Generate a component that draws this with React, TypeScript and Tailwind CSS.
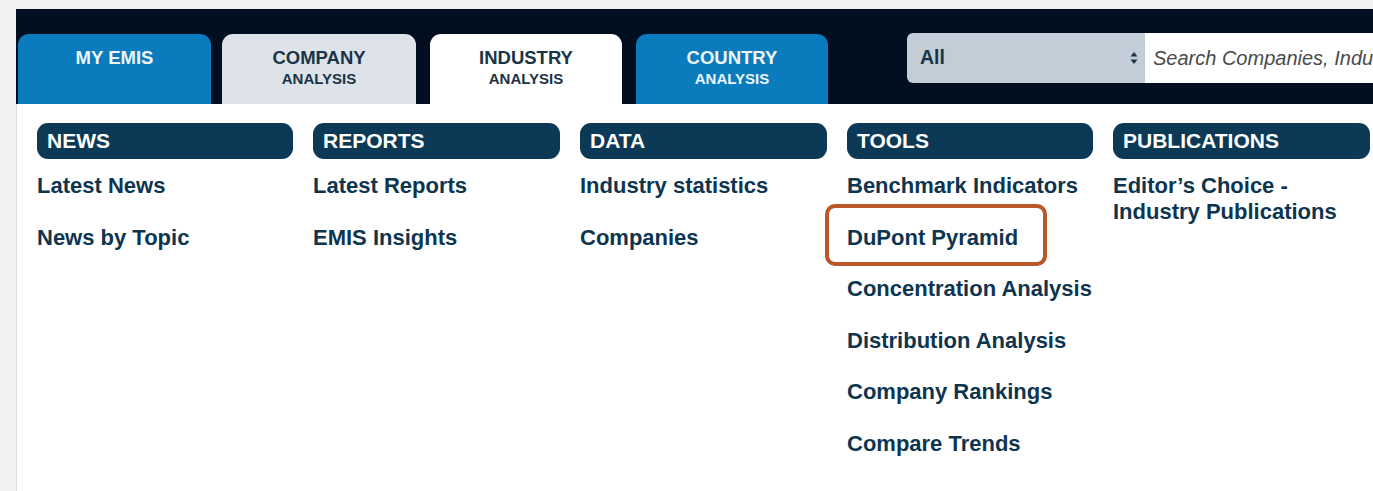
import React from "react";

const font = { fontFamily: '"Liberation Sans", Arial, sans-serif' };

type TabProps = { top: string; bottom?: string; variant: "blue" | "gray" | "white"; className?: string };

function Tab({ top, bottom, variant, className = "" }: TabProps) {
  const bg =
    variant === "blue" ? "bg-[#0a7cbd] text-[#eef5fb]" : variant === "gray" ? "bg-[#dde3e8] text-[#1a3347]" : "bg-white text-[#1a3347]";
  return (
    <div className={`shrink-0 h-[70px] rounded-t-[11px] flex flex-col items-center pt-[13px] font-bold ${bg} ${className}`}>
      <div className="text-[18.5px] leading-[22px]">{top}</div>
      {bottom && <div className="text-[15px] leading-[20px]">{bottom}</div>}
    </div>
  );
}

type ColProps = { title: string; items: React.ReactNode[]; width: string; highlight?: number };

function Column({ title, items, width, highlight }: ColProps) {
  return (
    <div className={`shrink-0 flex flex-col ${width}`}>
      <div className="h-[36px] rounded-[11px] bg-[#0c3956] text-white font-bold text-[21px] leading-[36px] pl-[10px]">{title}</div>
      <div className="flex flex-col gap-[25.5px] mt-[14px]">
        {items.map((it, i) => (
          <div key={i} className="relative text-[#0e3550] font-bold text-[22px] leading-[26px] whitespace-nowrap">
            {highlight === i && (
              <div className="absolute left-[-22px] top-[-21px] w-[222px] h-[62px] border-[4px] border-[#b9562a] rounded-[10px]" />
            )}
            {it}
          </div>
        ))}
      </div>
    </div>
  );
}

export default function App() {
  return (
    <div className="w-[1373px] h-[491px] bg-[#f2f2f2] overflow-hidden pt-[9px]" style={font}>
      <div className="ml-[16px] h-[95px] bg-[#020f21] flex items-end pl-[2px]">
        <Tab top="MY EMIS" variant="blue" className="w-[193px]" />
        <Tab top="COMPANY" bottom="ANALYSIS" variant="gray" className="w-[194px] ml-[11px]" />
        <Tab top="INDUSTRY" bottom="ANALYSIS" variant="white" className="w-[192px] ml-[14px]" />
        <Tab top="COUNTRY" bottom="ANALYSIS" variant="blue" className="w-[192px] ml-[14px]" />
        <div className="self-start mt-[24px] ml-[79px] flex h-[50px] flex-1 min-w-0">
          <div className="shrink-0 w-[238px] bg-[#c2cdd7] rounded-l-[6px] flex items-center justify-between pl-[13px] pr-[7px]">
            <span className="font-bold text-[19.5px] text-[#1a3347]">All</span>
            <svg width="8" height="14" viewBox="0 0 8 14">
              <path d="M4 1 L7.5 5.5 H0.5 Z" fill="#1a3347" />
              <path d="M4 13 L7.5 8.5 H0.5 Z" fill="#1a3347" />
            </svg>
          </div>
          <div className="flex-1 min-w-0 bg-white flex items-center pl-[8px] overflow-hidden whitespace-nowrap">
            <span className="italic text-[20px] text-[#4a4a4a]">Search Companies, Industries</span>
          </div>
        </div>
      </div>
      <div className="ml-[16px] h-[400px] bg-white border-l border-[#d9dee4] flex pl-[20px] pt-[19px] gap-[20px]">
        <Column title="NEWS" width="w-[256px]" items={["Latest News", "News by Topic"]} />
        <Column title="REPORTS" width="w-[247px]" items={["Latest Reports", "EMIS Insights"]} />
        <Column title="DATA" width="w-[247px]" items={["Industry statistics", "Companies"]} />
        <Column
          title="TOOLS"
          width="w-[246px]"
          highlight={1}
          items={[
            "Benchmark Indicators",
            "DuPont Pyramid",
            "Concentration Analysis",
            "Distribution Analysis",
            "Company Rankings",
            "Compare Trends",
          ]}
        />
        <div className="shrink-0 flex flex-col w-[257px]">
          <div className="h-[36px] rounded-[11px] bg-[#0c3956] text-white font-bold text-[21px] leading-[36px] pl-[10px]">PUBLICATIONS</div>
          <div className="mt-[14px] text-[#0e3550] font-bold text-[22px] leading-[26px]">
            Editor’s Choice -<br />
            Industry Publications
          </div>
        </div>
      </div>
    </div>
  );
}
